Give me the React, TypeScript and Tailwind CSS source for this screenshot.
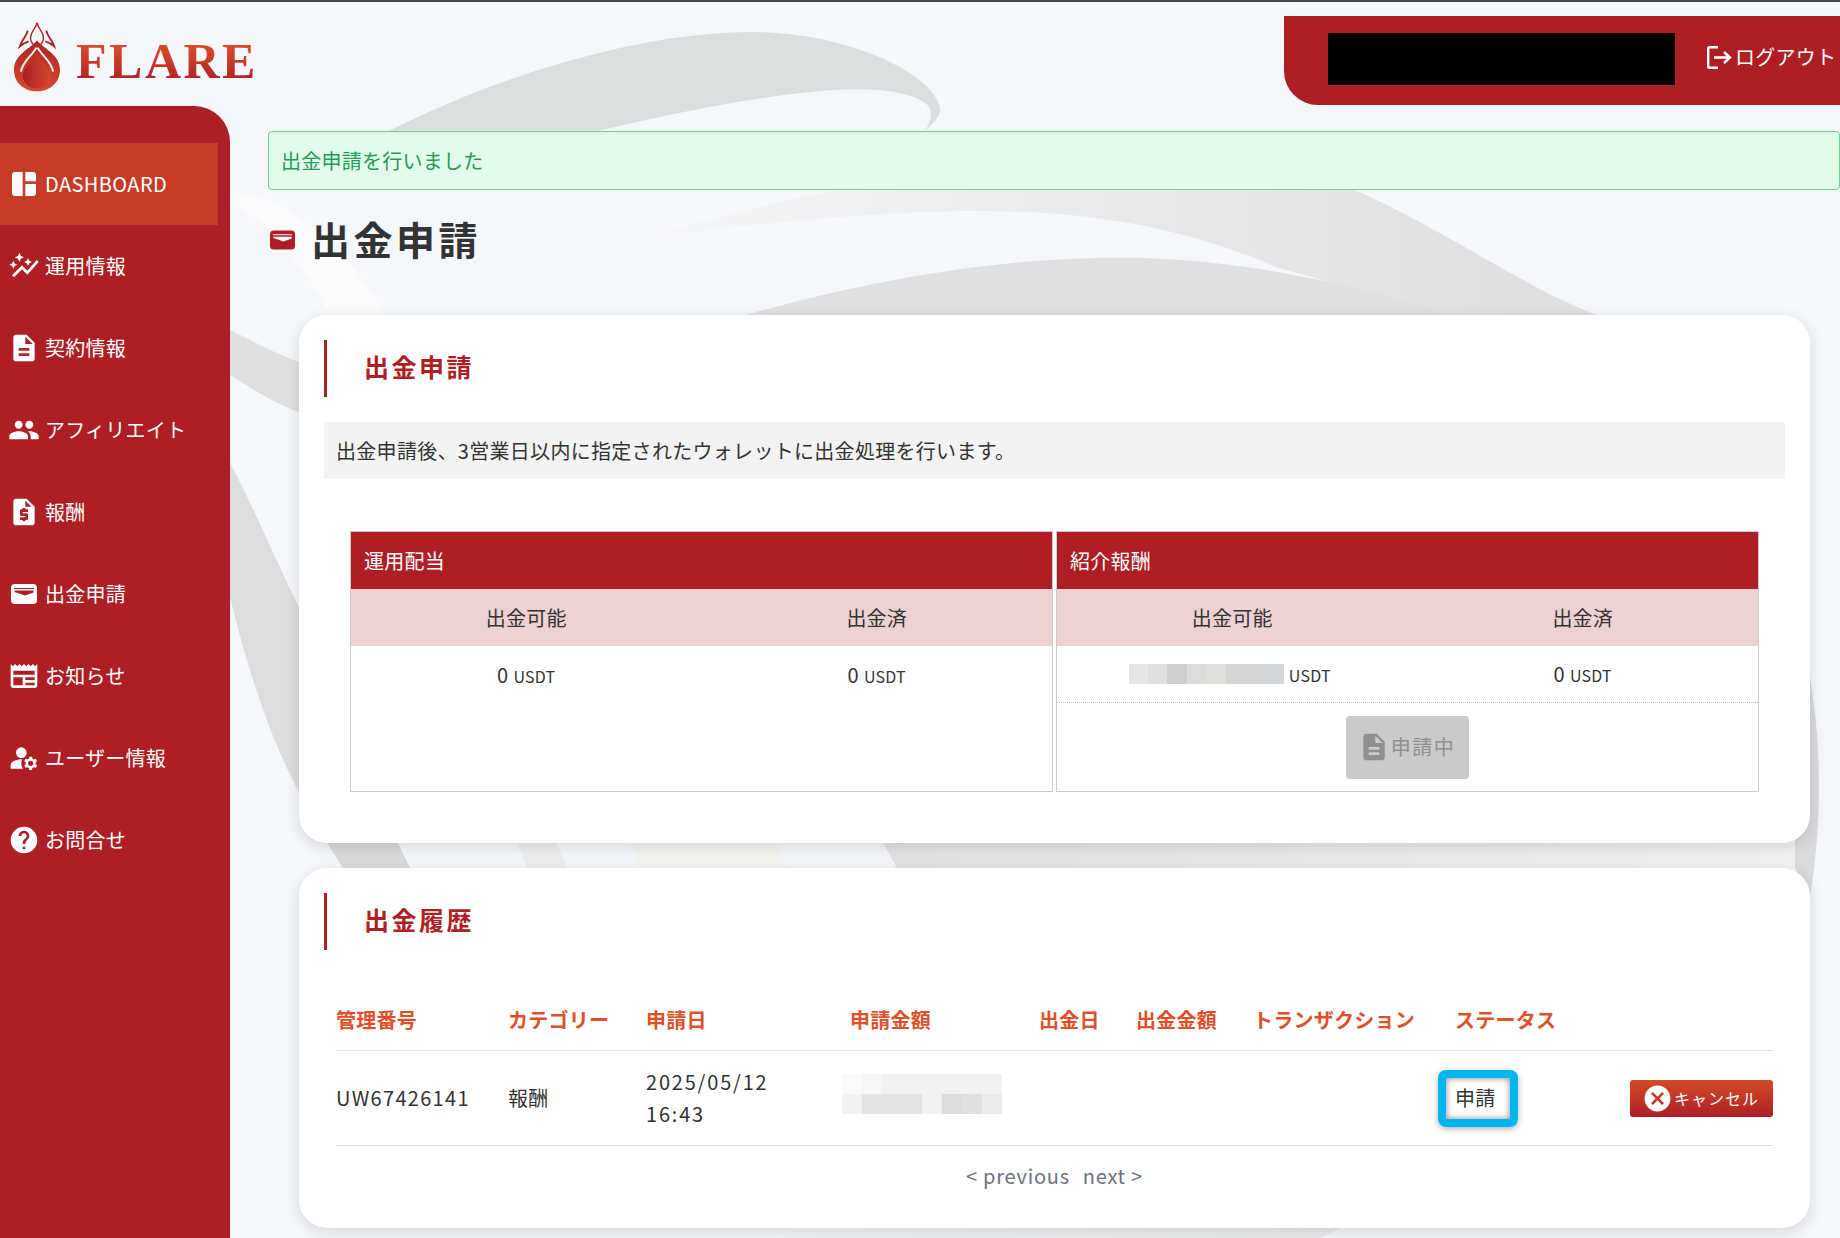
import {
  MdAutoGraph,
  MdCancel,
  MdDescription,
  MdHelp,
  MdManageAccounts,
  MdNewspaper,
  MdPeople,
  MdRequestQuote,
  MdSpaceDashboard,
} from 'react-icons/md';
import type { ReactNode } from 'react';

function WalletIcon({ className = '' }: { className?: string }) {
  return (
    <svg viewBox="0 0 26 20" className={className} fill="currentColor">
      <path
        fillRule="evenodd"
        d="M4 0h18a4 4 0 0 1 4 4v12a4 4 0 0 1-4 4H4a4 4 0 0 1-4-4V4a4 4 0 0 1 4-4zM3 4v1h20V4zM3.5 6.5 3.5 8 14 11.5 22.5 8.5 22.7 6.5z"
      />
    </svg>
  );
}

function Logo() {
  return (
    <div className="flex items-start pl-[14px] pt-[20px]">
      <svg viewBox="0 0 47 70" className="h-[70px] w-[46px]">
        <defs>
          <linearGradient id="flameOuter" x1="0" y1="0" x2="0" y2="1">
            <stop offset="0" stopColor="#a8281f" />
            <stop offset="1" stopColor="#d9482a" />
          </linearGradient>
          <linearGradient id="flameInner" x1="0" y1="0" x2="1" y2="0">
            <stop offset="0" stopColor="#ad1e25" />
            <stop offset="1" stopColor="#d2472a" />
          </linearGradient>
        </defs>
        <path
          d="M23.5 18C18 26 0 32 0 48c0 13 10 22 23.500 22S47 61 47 48C47 32 29 26 23.500 18z"
          fill="url(#flameOuter)"
        />
        <path
          d="M23.5 30C20 40 9 46 9 54c0 8 6 13 14.500 13S38 62 38 54c0-8-11-14-14.500-24z"
          fill="url(#flameInner)"
        />
        <path
          d="M23.5 24C20 33 9 38 7 50M23.5 24C27 33 38 38 40 50"
          fill="none"
          stroke="#f5f7fb"
          strokeWidth="2"
        />
        <path
          d="M23.5 0C22 7 16 10 17 17c.5 3 3 6 6.500 8 3.500-2 6-5 6.500-8C31 10 25 7 23.500 0z"
          fill="none"
          stroke="#b12a22"
          strokeWidth="1.500"
        />
        <path
          d="M14 8C13 14 8 17 6 24c3-3 6-4 9-5M33 8c1 6 6 9 8 16-3-3-6-4-9-5"
          fill="none"
          stroke="#a8281f"
          strokeWidth="2"
        />
      </svg>
      <span className="ml-4 mt-[17px] bg-gradient-to-b from-[#e0532c] to-[#ad1e25] bg-clip-text font-['Liberation_Serif',serif] text-[50px] font-bold leading-[44px] tracking-[2.5px] text-transparent">
        FLARE
      </span>
    </div>
  );
}

function Backdrop() {
  return (
    <svg viewBox="0 0 1840 1238" className="absolute inset-0 h-[1238px] w-[1840px]">
      <defs>
        <linearGradient id="swooshFade" gradientUnits="userSpaceOnUse" x1="658" y1="0" x2="1500" y2="0">
          <stop offset="0" stopColor="#f5f5f5" />
          <stop offset="1" stopColor="#dfe0df" />
        </linearGradient>
        <linearGradient id="gapFade" gradientUnits="userSpaceOnUse" x1="883" y1="0" x2="1795" y2="0">
          <stop offset="0" stopColor="#e1e2e1" />
          <stop offset="1" stopColor="#f1f1f1" />
        </linearGradient>
        <linearGradient id="bottomFade" gradientUnits="userSpaceOnUse" x1="770" y1="0" x2="1341" y2="0">
          <stop offset="0" stopColor="#f4f5f8" />
          <stop offset="1" stopColor="#e9eaea" />
        </linearGradient>
      </defs>
      <path d="M389 131C500 75 640 32 752 32c98 0 183 43 188 76 1 7-5 14-14 22 6-12 7-22-1-27C890 80 800 84 598 131z" fill="#dcdddd" />
      <path d="M230 192c60 4 115 53 155 123h-55c-30-55-65-100-100-110z" fill="#fbfbfb" />
      <path d="M658 235c62-20 122-35 184-45h513c95 42 180 105 251 128h-150l-180-51c-96-42-196-56-293-56-123 0-223 14-325 24z" fill="url(#swooshFade)" />
      <path d="M735 318c165-48 305-63 410-60 115 4 235 32 311 60z" fill="#dfe0df" />
      <path d="M230 330c25 12 45 24 69 32v50c-27-10-45-22-69-37z" fill="#dfe0df" />
      <path d="M230 463c25 47 50 107 69 144v185c-29-52-54-132-69-195z" fill="#dcdddc" />
      <path d="M327 843h71l12 25h-67z" fill="#d9dad9" />
      <path d="M517 843h39l12 25h-41z" fill="#eeeeee" />
      <path d="M630 843h144l16 25H640z" fill="#f4f4f2" />
      <path d="M883 843h912v25H897z" fill="url(#gapFade)" />
      <path d="M1810 677c12 73 12 143 0 221l-15-30v-25z" fill="#d9dad9" />
      <path d="M770 1228h571l-21 10H790z" fill="url(#bottomFade)" />
    </svg>
  );
}

const navItems: { label: string; icon: ReactNode; active?: boolean; latin?: boolean }[] = [
  { label: 'DASHBOARD', icon: <MdSpaceDashboard size={32} />, active: true, latin: true },
  { label: '運用情報', icon: <MdAutoGraph size={32} /> },
  { label: '契約情報', icon: <MdDescription size={32} /> },
  { label: 'アフィリエイト', icon: <MdPeople size={32} /> },
  { label: '報酬', icon: <MdRequestQuote size={32} /> },
  { label: '出金申請', icon: <WalletIcon className="h-5 w-[26px]" /> },
  { label: 'お知らせ', icon: <MdNewspaper size={32} /> },
  { label: 'ユーザー情報', icon: <MdManageAccounts size={32} /> },
  { label: 'お問合せ', icon: <MdHelp size={32} /> },
];

function Sidebar() {
  return (
    <aside className="h-[1132px] w-[230px] shrink-0 rounded-tr-[36px] bg-[#ad1e25] pt-[37px] text-white">
      <nav>
        {navItems.map((item) => (
          <div
            key={item.label}
            className={`flex h-[82px] w-[218px] items-center gap-[5px] pl-2 ${item.active ? 'bg-[#c73c26]' : ''}`}
          >
            <span className="flex h-8 w-8 items-center justify-center">{item.icon}</span>
            <span className={`text-[20px] ${item.latin ? 'tracking-[0.4px]' : ''}`}>{item.label}</span>
          </div>
        ))}
      </nav>
    </aside>
  );
}

function SectionHeading({ children }: { children: ReactNode }) {
  return (
    <div className="flex h-[57px] items-center border-l-[3px] border-[#ad1e25] pb-[3px] pl-[37px]">
      <h2 className="text-[25px] font-bold tracking-[2.5px] text-[#ad1e25]">{children}</h2>
    </div>
  );
}

function Mosaic({ cells, cols }: { cells: string[]; cols: string }) {
  return (
    <div className={`grid ${cols}`}>
      {cells.map((c, i) => (
        <div key={i} className={`h-5 ${c}`} />
      ))}
    </div>
  );
}

function Amount({ children, className = '' }: { children: ReactNode; className?: string }) {
  return (
    <div className={`flex items-center justify-center gap-[5px] ${className}`}>
      {children}
      <span className="pt-[2px] text-[16px]">USDT</span>
    </div>
  );
}

function BalanceTable({ title, available, footer }: { title: string; available: ReactNode; footer?: ReactNode }) {
  return (
    <div className="flex h-[261px] w-[703px] flex-col border border-[#cccccc]">
      <div className="flex h-[57px] items-center bg-[#ad1e25] pl-[13px] text-white">{title}</div>
      <div className="grid h-[57px] grid-cols-2 items-center bg-[#eed1d3] text-center">
        <span>出金可能</span>
        <span>出金済</span>
      </div>
      <div className={`grid h-[57px] grid-cols-2 items-center ${footer ? 'border-b border-dotted border-[#bbbbbb]' : ''}`}>
        <Amount className={footer ? 'pr-[5px]' : ''}>{available}</Amount>
        <Amount>0</Amount>
      </div>
      {footer}
    </div>
  );
}

const columns = ['管理番号', 'カテゴリー', '申請日', '申請金額', '出金日', '出金金額', 'トランザクション', 'ステータス'];

export default function App() {
  return (
    <div className="relative h-[1238px] w-[1840px] overflow-hidden bg-[#f5f7fb] font-['Noto_Sans_CJK_JP','Noto_Sans',sans-serif] text-[20px] tracking-[0.25px] text-[#333333]">
      <Backdrop />
      <div className="relative">
        <div className="h-[2px] bg-[#444444]" />

        {/* Header */}
        <header className="flex h-[104px] justify-between">
          <Logo />
          <div className="mt-[14px] flex h-[89px] w-[556px] items-center rounded-bl-[34px] bg-[#ad1e25] pb-[4px] pl-[44px] text-white">
            <div className="h-[52px] w-[347px] bg-black" />
            <div className="mb-[3px] ml-[32px] flex items-center gap-[3px]">
              <svg viewBox="0 0 25 23" className="h-[23px] w-[25px]" fill="none" stroke="currentColor" strokeWidth="2.400">
                <path d="M11 1.200H2.500a1.300 1.300 0 0 0-1.300 1.300v18a1.300 1.300 0 0 0 1.300 1.300H11" />
                <path d="M7 11.500h16M17 6l6 5.500-6 5.500" />
              </svg>
              <span>ログアウト</span>
            </div>
          </div>
        </header>

        <div className="flex">
          <Sidebar />

          <main className="flex-1 pl-[38px] pt-[25px]">
            <div className="flex h-[59px] items-center rounded-[4px] border border-[#6fd08f] bg-[#e3fbea] pl-[12px] text-[#1f9d55]">
              出金申請を行いました
            </div>

            <div className="mb-[25px] flex h-[100px] items-center pl-[2px]">
              <WalletIcon className="h-5 w-[25px] text-[#ad1e25]" />
              <h1 className="mb-[4px] ml-[16px] text-[39px] font-bold tracking-[3.5px] text-[#333333]">出金申請</h1>
            </div>

            <div className="ml-[31px] w-[1511px]">
              {/* Withdrawal request */}
              <section className="h-[528px] rounded-[28px] bg-white px-[25px] pt-[25px] shadow-[0_4px_16px_rgba(0,0,0,0.13)]">
                <SectionHeading>出金申請</SectionHeading>
                <p className="mt-[25px] flex h-[57px] items-center bg-[#f3f3f3] px-[12px] tracking-[0.3px]">
                  出金申請後、3営業日以内に指定されたウォレットに出金処理を行います。
                </p>
                <div className="mt-[52px] flex justify-center gap-[3px]">
                  <BalanceTable title="運用配当" available="0" />
                  <BalanceTable
                    title="紹介報酬"
                    available={
                      <Mosaic
                        cols="grid-cols-[repeat(8,19.4px)]"
                        cells={['bg-[#e6e6e6]', 'bg-[#e0e0e0]', 'bg-[#cfcfcf]', 'bg-[#dcdcdc]', 'bg-[#e2dedc]', 'bg-[#d5d6d8]', 'bg-[#d6d6d6]', 'bg-[#d5d6d8]']}
                      />
                    }
                    footer={
                      <div className="flex flex-1 items-center justify-center">
                        <div className="flex h-[63px] w-[123px] items-center justify-center rounded-[4px] bg-[#cacaca] tracking-[1.500px] text-[#8f8f8f]">
                          <MdDescription size={32} className="-mx-[2px]" />
                          <span className="ml-[3px]">申請中</span>
                        </div>
                      </div>
                    }
                  />
                </div>
              </section>

              {/* Withdrawal history */}
              <section className="mt-[25px] h-[360px] rounded-[28px] bg-white pl-[25px] pr-[37px] pt-[25px] shadow-[0_4px_16px_rgba(0,0,0,0.13)]">
                <SectionHeading>出金履歴</SectionHeading>
                <div className="ml-[12px] mt-[39px]">
                  <div className="grid h-[62px] grid-cols-[172px_138px_204px_189px_97px_117px_202px_317px] items-center border-b border-[#e2e2e2] font-bold text-[#e04f27]">
                    {columns.map((c) => (
                      <span key={c}>{c}</span>
                    ))}
                  </div>
                  <div className="grid h-[95px] grid-cols-[172px_138px_204px_189px_97px_117px_202px_175px_143px] items-center border-b border-[#e2e2e2]">
                    <span className="tracking-[1.300px]">UW67426141</span>
                    <span>報酬</span>
                    <span className="leading-[32px] tracking-[1.800px]">
                      2025/05/12
                      <br />
                      16:43
                    </span>
                    <div className="-ml-[8px] mb-[8px] w-[160px]">
                      <Mosaic
                        cols="grid-cols-8"
                        cells={[
                          'bg-[#fafafa]', 'bg-[#f6f6f6]', 'bg-[#f1f1f1]', 'bg-[#f2f2f2]', 'bg-[#f3f3f3]', 'bg-[#f3f3f3]', 'bg-[#f3f3f3]', 'bg-[#f3f3f3]',
                          'bg-[#f2f2f2]', 'bg-[#e4e4e4]', 'bg-[#e4e4e4]', 'bg-[#e4e4e4]', 'bg-[#f2f2f2]', 'bg-[#dcdcdc]', 'bg-[#e0e0e0]', 'bg-[#eaeaea]',
                        ]}
                      />
                    </div>
                    <span />
                    <span />
                    <span />
                    <div className="-ml-[17px] flex h-[57px] w-[80px] items-center rounded-[8px] border-[8px] border-[#00b4f0] pl-[9px] shadow-[0_2px_6px_rgba(0,0,0,0.3),inset_0_0_6px_rgba(0,0,0,0.5)]">
                      申請
                    </div>
                    <div className="flex h-[37px] items-center justify-center gap-[1px] rounded-[3px] bg-gradient-to-b from-[#d34a27] to-[#ad1e25] pr-[2px] text-[16px] tracking-[1px] text-white">
                      <MdCancel size={31} />
                      <span>キャンセル</span>
                    </div>
                  </div>
                  <div className="flex h-[60px] items-center justify-center gap-[13px] tracking-[0.75px] text-[#6b7280]">
                    <span>&lt; previous</span>
                    <span>next &gt;</span>
                  </div>
                </div>
              </section>
            </div>
          </main>
        </div>
      </div>
    </div>
  );
}
